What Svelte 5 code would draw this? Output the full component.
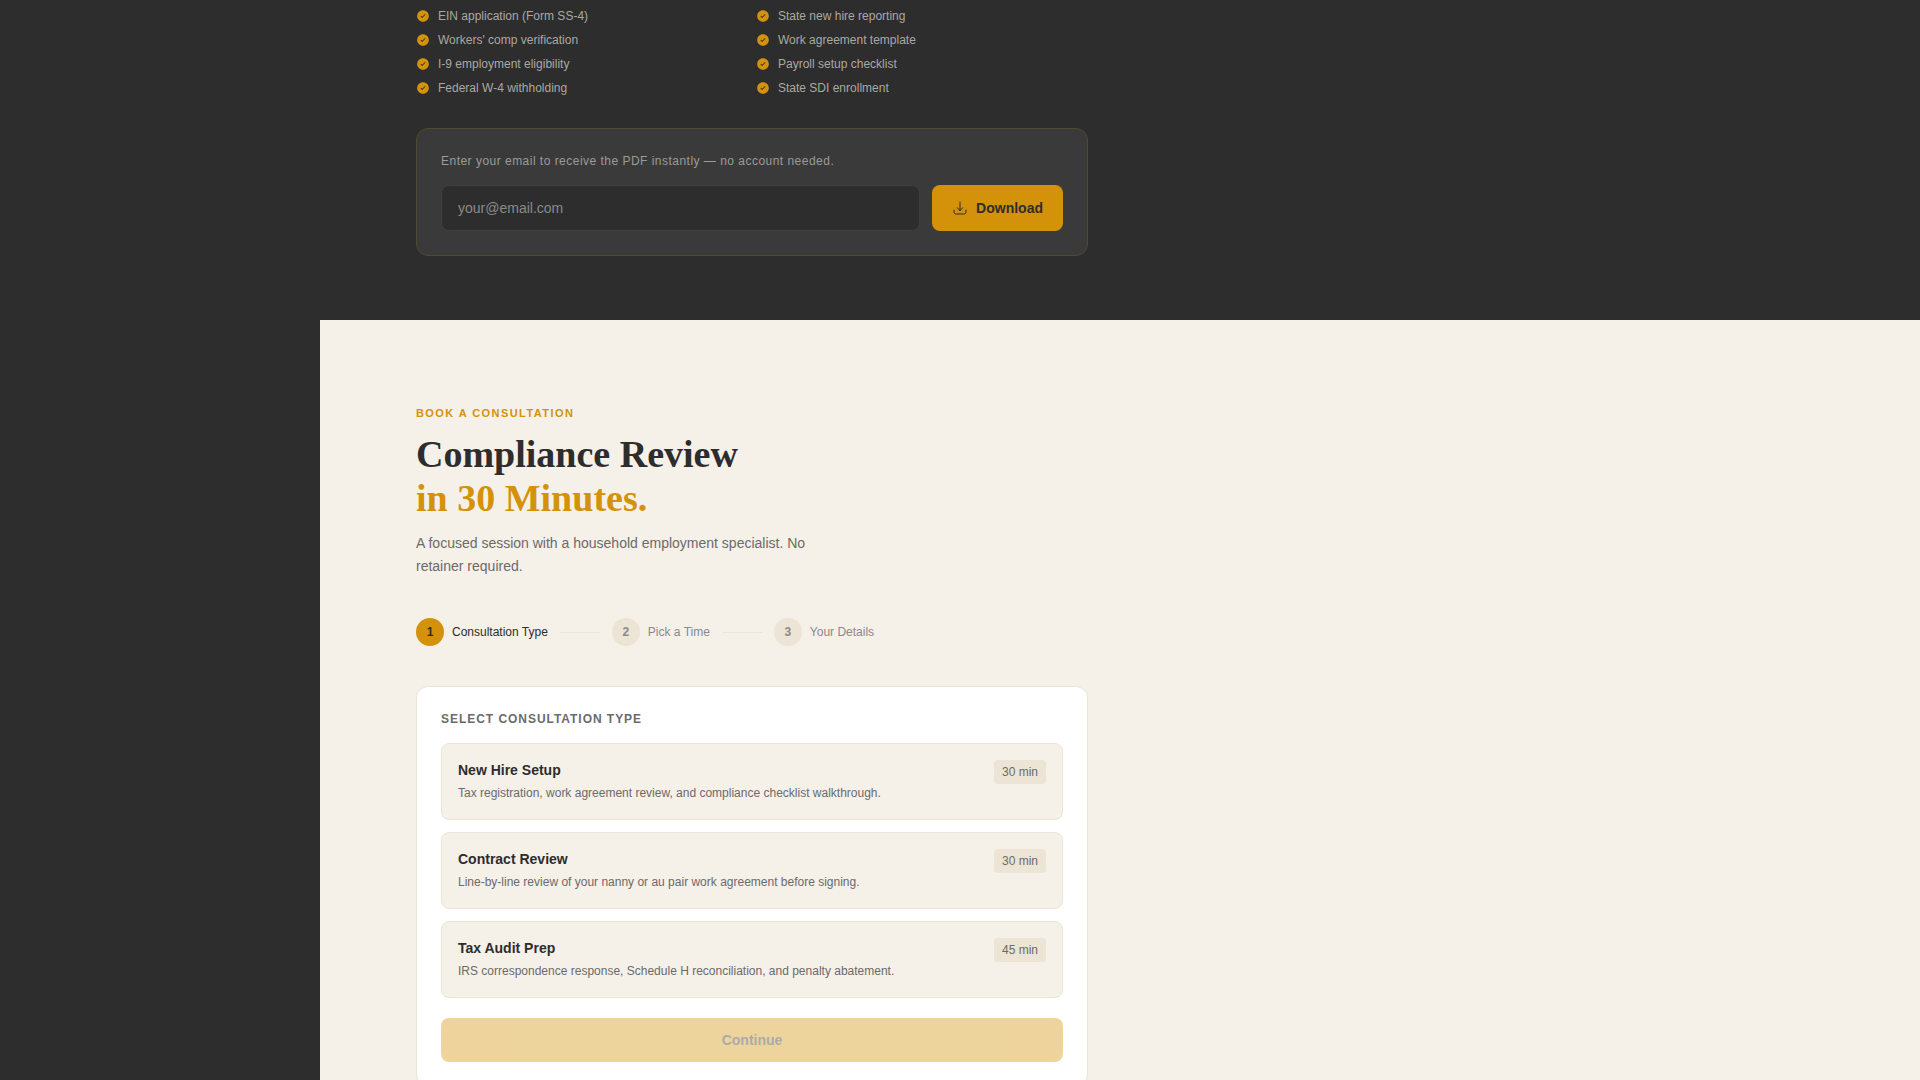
<script>
  let email = $state("");
  let picked = $state(null);
  let step = $state(0);

  // checklist contents, read row by row
  const items = [
    "EIN application (Form SS-4)",
    "State new hire reporting",
    "Workers' comp verification",
    "Work agreement template",
    "I-9 employment eligibility",
    "Payroll setup checklist",
    "Federal W-4 withholding",
    "State SDI enrollment",
  ];

  const steps = ["Consultation Type", "Pick a Time", "Your Details"];

  const types = [
    {
      name: "New Hire Setup",
      text: "Tax registration, work agreement review, and compliance checklist walkthrough.",
      time: "30 min",
    },
    {
      name: "Contract Review",
      text: "Line-by-line review of your nanny or au pair work agreement before signing.",
      time: "30 min",
    },
    {
      name: "Tax Audit Prep",
      text: "IRS correspondence response, Schedule H reconciliation, and penalty abatement.",
      time: "45 min",
    },
  ];

  function download(e) {
    e.preventDefault();
  }

  function next() {
    step = Math.min(step + 1, steps.length - 1);
  }
</script>

<div class="layout">
  <aside></aside>
  <main>
    <section class="checklist">
      <ul class="items">
        {#each items as item}
          <li>
            <svg width="14" height="14" viewBox="0 0 24 24" aria-hidden="true">
              <path
                fill="currentColor"
                fill-rule="evenodd"
                d="M22 12c0 5.523-4.477 10-10 10S2 17.523 2 12S6.477 2 12 2s10 4.477 10 10m-5.97-3.03a.75.75 0 0 1 0 1.06l-5 5a.75.75 0 0 1-1.06 0l-2-2a.75.75 0 1 1 1.06-1.06l1.47 1.47l4.47-4.47a.75.75 0 0 1 1.06 0"
              />
            </svg>
            {item}
          </li>
        {/each}
      </ul>

      <form class="signup" onsubmit={download}>
        <label for="email">
          Enter your email to receive the PDF instantly — no account needed.
        </label>
        <div class="row">
          <input
            id="email"
            type="email"
            placeholder="your@email.com"
            bind:value={email}
          />
          <button class="download">
            <svg
              width="16"
              height="16"
              viewBox="0 0 24 24"
              fill="none"
              stroke="currentColor"
              stroke-width="1.5"
              stroke-linecap="round"
              stroke-linejoin="round"
              aria-hidden="true"
            >
              <path
                d="M3 15c0 2.828 0 4.243.879 5.121C4.757 21 6.172 21 9 21h6c2.828 0 4.243 0 5.121-.879C21 19.243 21 17.828 21 15"
              />
              <path d="M12 3v13m0 0l4-4.375M12 16l-4-4.375" />
            </svg>
            Download
          </button>
        </div>
      </form>
    </section>

    <section class="booking">
      <p class="eyebrow">Book a Consultation</p>
      <h2>Compliance Review<br /><span>in 30 Minutes.</span></h2>
      <p class="lead">
        A focused session with a household employment specialist. No retainer
        required.
      </p>

      <ol class="steps">
        {#each steps as label, i}
          <li class:active={i === step}>
            <span class="num">{i + 1}</span>
            {label}
          </li>
          {#if i < steps.length - 1}
            <li class="line" aria-hidden="true"></li>
          {/if}
        {/each}
      </ol>

      <div class="card">
        <h3>Select Consultation Type</h3>
        <div class="types">
          {#each types as t, i}
            <button
              class="type"
              class:picked={picked === i}
              onclick={() => (picked = i)}
            >
              <span>
                <span class="name">{t.name}</span>
                <span class="text">{t.text}</span>
              </span>
              <span class="time">{t.time}</span>
            </button>
          {/each}
        </div>
        <button class="continue" disabled={picked === null} onclick={next}>
          Continue
        </button>
      </div>
    </section>
  </main>
</div>

<style>
  :global(body) {
    background: #2d2d2d;
  }

  .layout {
    display: grid;
    grid-template-columns: 320px 1fr;
    min-height: 100vh;
    font-family: "Liberation Sans", Arial, sans-serif;
    font-size: 12px;
    line-height: 16px;
    color: #2d2d2d;
  }

  * {
    box-sizing: border-box;
  }

  ul,
  ol,
  p,
  h2,
  h3 {
    margin: 0;
    padding: 0;
    list-style: none;
  }

  button,
  input {
    font: inherit;
    color: inherit;
  }

  button {
    cursor: pointer;
  }

  .checklist {
    padding: 8px 96px 64px;
  }

  .items {
    display: grid;
    grid-template-columns: 1fr 1fr;
    gap: 8px;
    max-width: 672px;
    margin-bottom: 32px;
    color: #aba8a3;
  }

  .items li {
    display: flex;
    align-items: center;
    gap: 8px;
  }

  .items svg {
    color: #d4920a;
  }

  .signup {
    max-width: 672px;
    padding: 24px;
    background: #3a3a3a;
    border: 1px solid #514931;
    border-radius: 12px;
  }

  .signup label {
    display: block;
    margin-bottom: 16px;
    letter-spacing: 0.04em;
    color: #9a9a9a;
  }

  .row {
    display: flex;
    gap: 12px;
  }

  .row input {
    flex: 1;
    min-width: 0;
    height: 46px;
    padding: 0 16px;
    font-size: 14px;
    color: #f5f0e8;
    background: #2d2d2d;
    border: 1px solid #3e3e3e;
    border-radius: 8px;
  }

  .row input::placeholder {
    color: #8a8a8a;
  }

  .download {
    display: flex;
    align-items: center;
    gap: 8px;
    padding: 0 20px;
    font-size: 14px;
    font-weight: 700;
    background: #d4920a;
    border: none;
    border-radius: 8px;
  }

  .booking {
    padding: 80px 96px;
    background: #f5f0e8;
  }

  .eyebrow {
    margin-bottom: 6px;
    font-size: 11px;
    font-weight: 700;
    line-height: 26px;
    letter-spacing: 0.13em;
    text-transform: uppercase;
    color: #d4920a;
  }

  h2 {
    margin-bottom: 12px;
    font-family: "Liberation Serif", "Times New Roman", serif;
    font-size: 38px;
    font-weight: 700;
    line-height: 44px;
  }

  h2 span {
    color: #d4920a;
  }

  .lead {
    max-width: 420px;
    margin-bottom: 40px;
    font-size: 14px;
    line-height: 23px;
    color: #6b6b6b;
  }

  .steps {
    display: flex;
    align-items: center;
    gap: 12px;
    margin-bottom: 40px;
    color: #8a8a8a;
  }

  .steps li {
    display: flex;
    align-items: center;
    gap: 8px;
  }

  .steps .active {
    color: #2d2d2d;
  }

  .num {
    display: grid;
    place-items: center;
    width: 28px;
    height: 28px;
    font-weight: 700;
    background: #ece4d4;
    border-radius: 50%;
  }

  .active .num {
    background: #d4920a;
  }

  .steps .line {
    width: 40px;
    height: 1px;
    background: #ece4d4;
  }

  .card {
    max-width: 672px;
    padding: 24px;
    background: #fff;
    border: 1px solid #ece4d4;
    border-radius: 12px;
  }

  h3 {
    margin-bottom: 16px;
    font-size: 12px;
    font-weight: 700;
    letter-spacing: 0.08em;
    text-transform: uppercase;
    color: #6b6b6b;
  }

  .types {
    display: grid;
    gap: 12px;
    margin-bottom: 20px;
  }

  .type {
    display: flex;
    align-items: flex-start;
    justify-content: space-between;
    gap: 16px;
    padding: 16px;
    text-align: left;
    background: #f5f0e8;
    border: 1px solid #ece4d4;
    border-radius: 8px;
  }

  .type.picked {
    border-color: #d4920a;
  }

  .name,
  .text {
    display: block;
  }

  .name {
    margin-bottom: 4px;
    font-size: 14px;
    font-weight: 700;
    line-height: 20px;
  }

  .text {
    line-height: 19px;
    color: #6b6b6b;
  }

  .time {
    flex-shrink: 0;
    padding: 4px 8px;
    color: #6b6b6b;
    background: #ece4d4;
    border-radius: 4px;
  }

  .continue {
    width: 100%;
    padding: 12px;
    font-size: 14px;
    font-weight: 700;
    line-height: 20px;
    background: #d4920a;
    border: none;
    border-radius: 8px;
  }

  .continue:disabled {
    opacity: 0.4;
    cursor: not-allowed;
  }
</style>
